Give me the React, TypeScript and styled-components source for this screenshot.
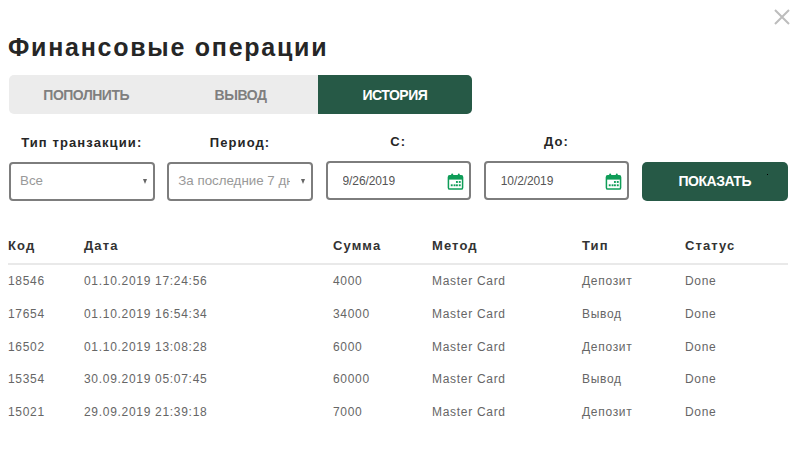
import { createGlobalStyle, styled } from "styled-components";

const GlobalStyle = createGlobalStyle`
  html, body {
    margin: 0;
    padding: 0;
    background: #fff;
    font-family: "Liberation Sans", Arial, sans-serif;
  }
`;

const Modal = styled.div`
  position: relative;
  width: 799px;
  height: 464px;
  box-sizing: border-box;
  padding: 31px 11px 0 8px;
  overflow: hidden;
`;

const CloseButton = styled.button`
  position: absolute;
  top: 9px;
  right: 9px;
  width: 16px;
  height: 16px;
  padding: 0;
  border: 0;
  background: none;
  color: #bdbdbd;
`;

const Title = styled.h1`
  margin: 0 0 12px;
  font-size: 25px;
  line-height: 32px;
  font-weight: 700;
  letter-spacing: 1.75px;
  color: #262626;
`;

const Tabs = styled.div`
  display: flex;
  width: 463px;
  height: 39px;
  margin-left: 1px;
  border-radius: 5px;
  background: #ececec;
  overflow: hidden;
`;

const Tab = styled.div<{ $active?: boolean }>`
  flex: 1;
  display: flex;
  align-items: center;
  justify-content: center;
  font-size: 14px;
  font-weight: 700;
  letter-spacing: -0.5px;
  color: ${(p) => (p.$active ? "#fff" : "#7f7f7f")};
  background: ${(p) => (p.$active ? "#265946" : "transparent")};
`;

const Filters = styled.div`
  display: grid;
  grid-template-columns: repeat(5, 145.5px);
  column-gap: 12.75px;
  margin: 20px 0 0 1px;
`;

const Field = styled.div<{ $raised?: boolean }>`
  display: flex;
  flex-direction: column;
  margin-top: ${(p) => (p.$raised ? "-1px" : "0")};
`;

const FieldLabel = styled.label`
  height: 28px;
  text-align: center;
  font-size: 13px;
  line-height: 18px;
  font-weight: 700;
  letter-spacing: 1.1px;
  color: #262626;
`;

const SelectBox = styled.div`
  position: relative;
  height: 39px;

  &::after {
    content: "";
    position: absolute;
    top: 17px;
    right: 8px;
    border-left: 2.5px solid transparent;
    border-right: 2.5px solid transparent;
    border-top: 5px solid #666;
  }
`;

const Select = styled.select`
  width: 100%;
  height: 100%;
  box-sizing: border-box;
  padding: 0 21px 2px 9px;
  border: 2px solid #7d7d7d;
  border-radius: 4px;
  background: #fff;
  appearance: none;
  font-family: inherit;
  font-size: 13.33px;
  color: #999;
  outline: none;
`;

const DateBox = styled.div`
  position: relative;
  height: 39px;
`;

const DateInput = styled.input`
  width: 100%;
  height: 100%;
  box-sizing: border-box;
  padding: 0 0 0 15px;
  border: 2px solid #7d7d7d;
  border-radius: 4px;
  background: #fff;
  font-family: inherit;
  font-size: 12px;
  letter-spacing: -0.1px;
  color: #555;
  outline: none;
`;

const CalendarIcon = styled.svg`
  position: absolute;
  top: 12px;
  right: 7px;
  width: 17px;
  height: 17px;
`;

const ShowButton = styled.button`
  position: relative;
  height: 39px;
  margin-top: 27.5px;
  padding: 0;
  border: 0;
  border-radius: 5px;
  background: #265946;
  font-family: inherit;
  font-size: 14px;
  font-weight: 700;
  letter-spacing: -0.5px;
  color: #fff;
`;

const Speck = styled.span`
  position: absolute;
  top: 12px;
  left: 125px;
  width: 1px;
  height: 1px;
  background: #000;
`;

const Table = styled.table`
  width: 780px;
  margin-top: 31px;
  border-collapse: collapse;
  table-layout: fixed;
`;

const HeadCell = styled.th<{ $width: number }>`
  width: ${(p) => p.$width}px;
  height: 28px;
  padding: 0 0 3px;
  border-bottom: 2px solid #e9e9e9;
  text-align: left;
  font-size: 13px;
  line-height: 16px;
  font-weight: 700;
  letter-spacing: 1.1px;
  color: #333;
`;

const Cell = styled.td`
  height: 32.7px;
  padding: 0;
  font-size: 12px;
  letter-spacing: 0.7px;
  color: #666;
`;

const columns = [
  { title: "Код", width: 76 },
  { title: "Дата", width: 249 },
  { title: "Сумма", width: 99 },
  { title: "Метод", width: 150 },
  { title: "Тип", width: 103 },
  { title: "Статус", width: 103 },
];

const rows = [
  ["18546", "01.10.2019 17:24:56", "4000", "Master Card", "Депозит", "Done"],
  ["17654", "01.10.2019 16:54:34", "34000", "Master Card", "Вывод", "Done"],
  ["16502", "01.10.2019 13:08:28", "6000", "Master Card", "Депозит", "Done"],
  ["15354", "30.09.2019 05:07:45", "60000", "Master Card", "Вывод", "Done"],
  ["15021", "29.09.2019 21:39:18", "7000", "Master Card", "Депозит", "Done"],
];

const Calendar = () => (
  <CalendarIcon viewBox="0 0 17 18" aria-hidden="true">
    <rect x="1" y="3" width="15" height="14" rx="1.5" fill="none" stroke="#0f9d58" strokeWidth="1.6" />
    <rect x="1" y="3" width="15" height="4" fill="#0f9d58" />
    <rect x="4" y="0.5" width="2" height="4.5" rx="1" fill="#0f9d58" />
    <rect x="11" y="0.5" width="2" height="4.5" rx="1" fill="#0f9d58" />
    <g fill="#0f9d58">
      <rect x="9" y="8.5" width="2" height="2" />
      <rect x="12" y="8.5" width="2" height="2" />
      <rect x="3.5" y="12" width="2" height="2" />
      <rect x="6.5" y="12" width="2" height="2" />
      <rect x="9" y="12" width="2" height="2" />
      <rect x="12" y="12" width="2" height="2" />
    </g>
  </CalendarIcon>
);

const App = () => {
  return (
    <Modal>
      <GlobalStyle />
      <CloseButton aria-label="Закрыть">
        <svg width="16" height="16" viewBox="0 0 16 16">
          <path d="M1 1 L15 15 M15 1 L1 15" stroke="currentColor" strokeWidth="2" fill="none" />
        </svg>
      </CloseButton>
      <Title>Финансовые операции</Title>
      <Tabs>
        <Tab>ПОПОЛНИТЬ</Tab>
        <Tab>ВЫВОД</Tab>
        <Tab $active>ИСТОРИЯ</Tab>
      </Tabs>
      <Filters>
        <Field>
          <FieldLabel>Тип транзакции:</FieldLabel>
          <SelectBox>
            <Select defaultValue="all">
              <option value="all">Все</option>
            </Select>
          </SelectBox>
        </Field>
        <Field>
          <FieldLabel>Период:</FieldLabel>
          <SelectBox>
            <Select defaultValue="week">
              <option value="week">За последние 7 дней</option>
            </Select>
          </SelectBox>
        </Field>
        <Field $raised>
          <FieldLabel>С:</FieldLabel>
          <DateBox>
            <DateInput readOnly value="9/26/2019" />
            <Calendar />
          </DateBox>
        </Field>
        <Field $raised>
          <FieldLabel>До:</FieldLabel>
          <DateBox>
            <DateInput readOnly value="10/2/2019" />
            <Calendar />
          </DateBox>
        </Field>
        <ShowButton>
          ПОКАЗАТЬ
          <Speck />
        </ShowButton>
      </Filters>
      <Table>
        <thead>
          <tr>
            {columns.map((col) => (
              <HeadCell key={col.title} $width={col.width}>
                {col.title}
              </HeadCell>
            ))}
          </tr>
        </thead>
        <tbody>
          {rows.map((row) => (
            <tr key={row[0]}>
              {row.map((value, i) => (
                <Cell key={i}>{value}</Cell>
              ))}
            </tr>
          ))}
        </tbody>
      </Table>
    </Modal>
  );
};

export default App;
